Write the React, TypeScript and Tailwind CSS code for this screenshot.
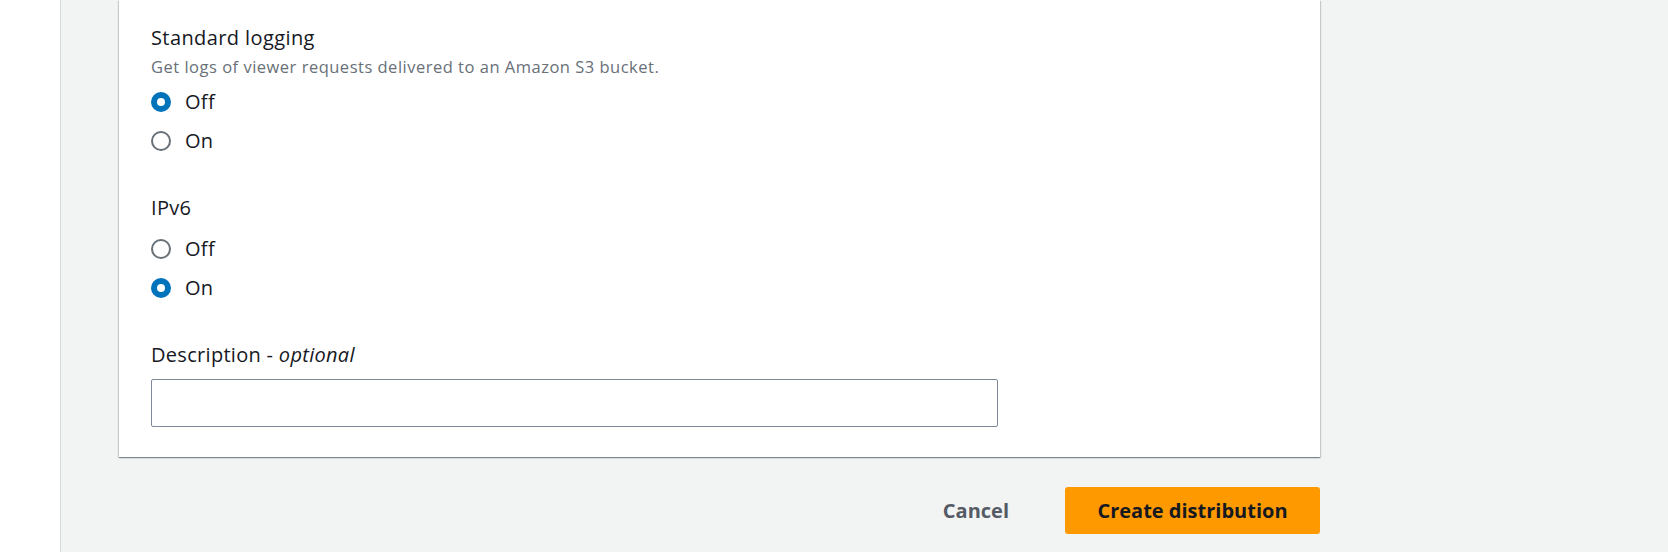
import React from 'react';

const font = { fontFamily: '"Open Sans", "Noto Sans", Arial, sans-serif' };

function Radio({ label, checked }: { label: string; checked?: boolean }) {
  return (
    <label className="flex h-[39px] items-center gap-[14px]">
      {checked ? (
        <span className="h-[20px] w-[20px] rounded-full border-[6px] border-[#0073bb] bg-white" />
      ) : (
        <span className="h-[20px] w-[20px] rounded-full border-2 border-[#687078] bg-white" />
      )}
      <span className="text-[20px] leading-[26px] tracking-[0.3px] text-[#16191f]">{label}</span>
    </label>
  );
}

export default function App() {
  return (
    <div className="flex h-[552px] w-full overflow-hidden bg-[#f2f3f3]" style={font}>
      <div className="w-[61px] shrink-0 border-r border-[#d5dbdb] bg-white" />
      <div className="flex-1 pl-[58px]">
        <div className="w-[1201px] bg-white pl-[32px] pt-[25px] pb-[30px] shadow-[0_1px_1px_0_rgba(0,28,36,0.3),1px_1px_1px_0_rgba(0,28,36,0.15),-1px_1px_1px_0_rgba(0,28,36,0.15)]">
          <div className="text-[20px] leading-[26px] tracking-[0.4px] text-[#16191f]">Standard logging</div>
          <div className="mt-[5px] text-[16.5px] leading-[22px] tracking-[0.5px] text-[#687078]">
            Get logs of viewer requests delivered to an Amazon S3 bucket.
          </div>
          <div className="mt-[4px]">
            <Radio label="Off" checked />
            <Radio label="On" />
          </div>

          <div className="mt-[35px] text-[20px] leading-[26px] tracking-[0.3px] text-[#16191f]">IPv6</div>
          <div className="mt-[8px]">
            <Radio label="Off" />
            <Radio label="On" checked />
          </div>

          <div className="mt-[35px] text-[20px] leading-[26px] tracking-[0.3px] text-[#16191f]">
            Description - <i>optional</i>
          </div>
          <input
            type="text"
            className="mt-[11px] block h-[48px] w-[847px] rounded-[2px] border border-[#7d8998] bg-white px-3 outline-none"
          />
        </div>

        <div className="flex w-[1201px] items-center justify-end gap-[56px] pt-[30px]">
          <button type="button" className="text-[20px] font-bold text-[#545b64]">
            Cancel
          </button>
          <button
            type="button"
            className="flex h-[47px] w-[255px] items-center justify-center rounded-[3px] bg-[#ff9900] text-[20px] font-bold text-[#16191f]"
          >
            Create distribution
          </button>
        </div>
      </div>
    </div>
  );
}
